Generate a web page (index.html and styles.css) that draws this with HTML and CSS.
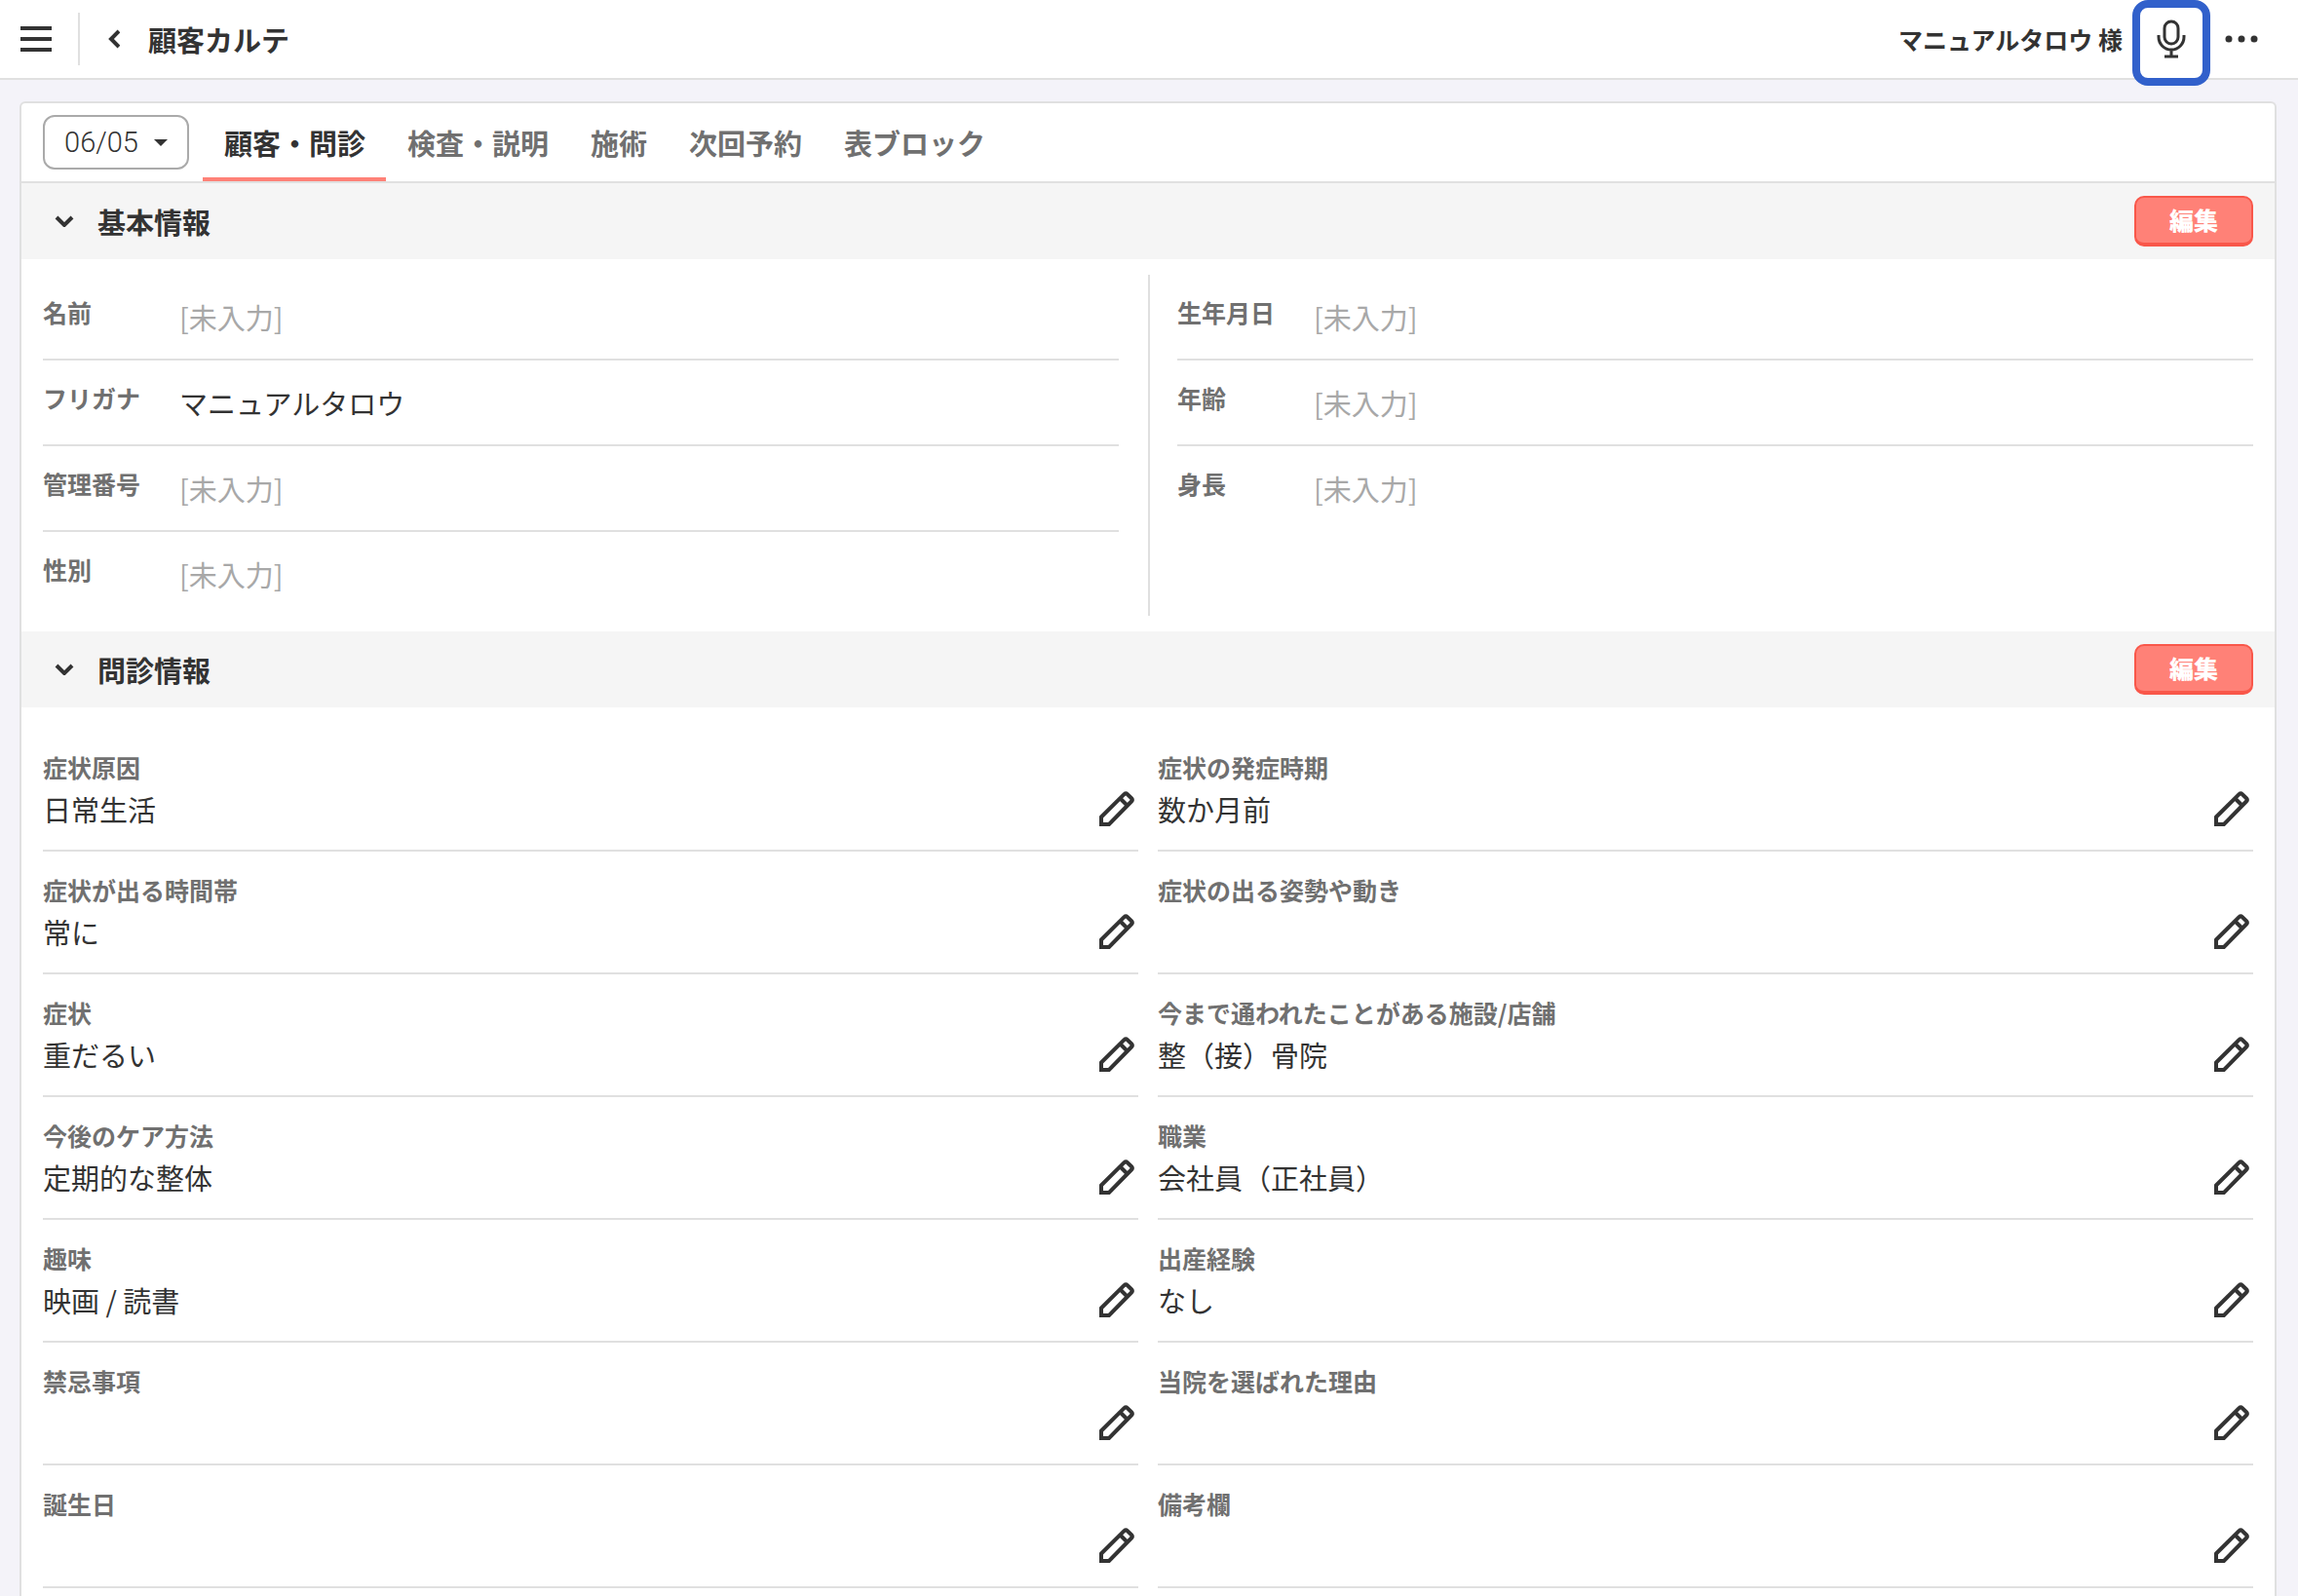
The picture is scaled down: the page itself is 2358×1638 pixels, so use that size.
FILE: index.html
```html
<!DOCTYPE html>
<html lang="ja">
<head>
<meta charset="utf-8">
<meta name="viewport" content="width=device-width, initial-scale=1">
<title>顧客カルテ</title>
<link rel="stylesheet" href="styles.css">
</head>
<body>
<svg class="sprite" aria-hidden="true">
  <symbol id="pencil" viewBox="0 0 36 36">
    <path d="M2 26.500 25.500 3.200Q27.200 1.600 28.900 3.200L33 7.200Q34.600 8.900 33 10.500L10 34H2Z"/>
    <path d="M21.500 7.500 29 15"/>
  </symbol>
  <symbol id="down" viewBox="0 0 20 12">
    <path d="M2 2 10 10 18 2"/>
  </symbol>
</svg>

<header class="topbar">
  <button class="icon-button menu" type="button" aria-label="メニュー">
    <svg width="32" height="26" viewBox="0 0 32 26"><path d="M0 2H32M0 13H32M0 24H32"/></svg>
  </button>
  <button class="icon-button back" type="button" aria-label="戻る">
    <svg width="12" height="20" viewBox="0 0 12 20"><path d="M11 2 3 10 11 18"/></svg>
  </button>
  <h1 class="page-title">顧客カルテ</h1>
  <p class="customer">マニュアルタロウ 様</p>
  <button class="icon-button mic" type="button" aria-label="音声入力">
    <svg width="30" height="40" viewBox="0 0 30 40"><rect x="8" y="2" width="14" height="23" rx="7"/><path d="M2 16v2a13 13 0 0 0 26 0v-2M15 31v7M8 38H22"/></svg>
  </button>
  <button class="icon-button more" type="button" aria-label="その他">
    <svg class="dots" width="34" height="8" viewBox="0 0 34 8"><circle cx="4" cy="4" r="3.500"/><circle cx="17" cy="4" r="3.500"/><circle cx="30" cy="4" r="3.500"/></svg>
  </button>
</header>

<main class="card">
  <nav class="tabs">
    <button class="date" type="button">06/05<span class="caret"></span></button>
    <a class="tab active" href="#basic">顧客・問診</a>
    <a class="tab" href="#exam">検査・説明</a>
    <a class="tab" href="#treatment">施術</a>
    <a class="tab" href="#next">次回予約</a>
    <a class="tab" href="#blocks">表ブロック</a>
  </nav>

  <section id="basic">
    <div class="section-head">
      <button class="icon-button fold" type="button" aria-label="基本情報を折りたたむ"><svg width="20" height="12"><use href="#down"/></svg></button>
      <h2 class="section-title">基本情報</h2>
      <button class="edit" type="button">編集</button>
    </div>
    <div class="basic">
      <dl class="basic-column">
        <div class="basic-row"><dt class="label">名前</dt><dd class="value empty">[未入力]</dd></div>
        <div class="basic-row"><dt class="label">フリガナ</dt><dd class="value">マニュアルタロウ</dd></div>
        <div class="basic-row"><dt class="label">管理番号</dt><dd class="value empty">[未入力]</dd></div>
        <div class="basic-row"><dt class="label">性別</dt><dd class="value empty">[未入力]</dd></div>
      </dl>
      <dl class="basic-column">
        <div class="basic-row"><dt class="label">生年月日</dt><dd class="value empty">[未入力]</dd></div>
        <div class="basic-row"><dt class="label">年齢</dt><dd class="value empty">[未入力]</dd></div>
        <div class="basic-row"><dt class="label">身長</dt><dd class="value empty">[未入力]</dd></div>
      </dl>
    </div>
  </section>

  <section id="interview">
    <div class="section-head">
      <button class="icon-button fold" type="button" aria-label="問診情報を折りたたむ"><svg width="20" height="12"><use href="#down"/></svg></button>
      <h2 class="section-title">問診情報</h2>
      <button class="edit" type="button">編集</button>
    </div>
    <div class="answers">
      <div class="answer"><div><h3 class="label">症状原因</h3><p class="value">日常生活</p></div><button class="icon-button pen" type="button" aria-label="症状原因を編集"><svg width="36" height="36"><use href="#pencil"/></svg></button></div>
      <div class="answer"><div><h3 class="label">症状の発症時期</h3><p class="value">数か月前</p></div><button class="icon-button pen" type="button" aria-label="症状の発症時期を編集"><svg width="36" height="36"><use href="#pencil"/></svg></button></div>
      <div class="answer"><div><h3 class="label">症状が出る時間帯</h3><p class="value">常に</p></div><button class="icon-button pen" type="button" aria-label="症状が出る時間帯を編集"><svg width="36" height="36"><use href="#pencil"/></svg></button></div>
      <div class="answer"><div><h3 class="label">症状の出る姿勢や動き</h3></div><button class="icon-button pen" type="button" aria-label="症状の出る姿勢や動きを編集"><svg width="36" height="36"><use href="#pencil"/></svg></button></div>
      <div class="answer"><div><h3 class="label">症状</h3><p class="value">重だるい</p></div><button class="icon-button pen" type="button" aria-label="症状を編集"><svg width="36" height="36"><use href="#pencil"/></svg></button></div>
      <div class="answer"><div><h3 class="label">今まで通われたことがある施設/店舗</h3><p class="value">整（接）骨院</p></div><button class="icon-button pen" type="button" aria-label="今まで通われたことがある施設/店舗を編集"><svg width="36" height="36"><use href="#pencil"/></svg></button></div>
      <div class="answer"><div><h3 class="label">今後のケア方法</h3><p class="value">定期的な整体</p></div><button class="icon-button pen" type="button" aria-label="今後のケア方法を編集"><svg width="36" height="36"><use href="#pencil"/></svg></button></div>
      <div class="answer"><div><h3 class="label">職業</h3><p class="value">会社員（正社員）</p></div><button class="icon-button pen" type="button" aria-label="職業を編集"><svg width="36" height="36"><use href="#pencil"/></svg></button></div>
      <div class="answer"><div><h3 class="label">趣味</h3><p class="value">映画 / 読書</p></div><button class="icon-button pen" type="button" aria-label="趣味を編集"><svg width="36" height="36"><use href="#pencil"/></svg></button></div>
      <div class="answer"><div><h3 class="label">出産経験</h3><p class="value">なし</p></div><button class="icon-button pen" type="button" aria-label="出産経験を編集"><svg width="36" height="36"><use href="#pencil"/></svg></button></div>
      <div class="answer"><div><h3 class="label">禁忌事項</h3></div><button class="icon-button pen" type="button" aria-label="禁忌事項を編集"><svg width="36" height="36"><use href="#pencil"/></svg></button></div>
      <div class="answer"><div><h3 class="label">当院を選ばれた理由</h3></div><button class="icon-button pen" type="button" aria-label="当院を選ばれた理由を編集"><svg width="36" height="36"><use href="#pencil"/></svg></button></div>
      <div class="answer"><div><h3 class="label">誕生日</h3></div><button class="icon-button pen" type="button" aria-label="誕生日を編集"><svg width="36" height="36"><use href="#pencil"/></svg></button></div>
      <div class="answer"><div><h3 class="label">備考欄</h3></div><button class="icon-button pen" type="button" aria-label="備考欄を編集"><svg width="36" height="36"><use href="#pencil"/></svg></button></div>
    </div>
  </section>
</main>
</body>
</html>
```
FILE: styles.css
```css
*,
*::after {
  box-sizing: border-box;
}

body {
  display: flex;
  flex-direction: column;
  min-height: 100vh;
  margin: 0;
  background: #f4f3f9;
  color: #333;
  font: 400 29px/44px "Noto Sans CJK JP", sans-serif;
}

h1, h2, h3, p, dl, dd {
  margin: 0;
}

button {
  font: inherit;
  color: inherit;
  cursor: pointer;
}

a {
  color: inherit;
  text-decoration: none;
}

svg {
  display: block;
  fill: none;
  stroke: #333;
  stroke-width: 4;
}

.sprite {
  position: absolute;
  width: 0;
  height: 0;
}

.icon-button {
  display: flex;
  align-items: center;
  justify-content: center;
  flex: none;
  padding: 0;
  border: 0;
  background: none;
}

/* Top bar */
.topbar {
  display: flex;
  align-items: center;
  height: 82px;
  padding-right: 34px;
  border-bottom: 2px solid #e0e0e0;
  background: #fff;
}

.menu {
  width: 82px;
  height: 54px;
  padding-right: 6px;
  border-right: 2px solid #e0e0e0;
}

.back {
  width: 70px;
  height: 54px;
}

.page-title {
  font-size: 29px;
  line-height: 44px;
}

.customer {
  margin: 0 2px 0 auto;
  font-size: 25px;
  font-weight: 700;
}

.mic {
  position: relative;
  width: 96px;
  height: 80px;
}

.mic svg {
  stroke-width: 3;
}

.mic::after {
  content: "";
  position: absolute;
  top: 0;
  left: 8px;
  width: 80px;
  height: 88px;
  border: 8px solid #3160cb;
  border-radius: 16px;
}

.more {
  width: 48px;
  height: 80px;
}

.dots {
  fill: #333;
  stroke: none;
}

/* Chart card */
.card {
  flex: 1;
  margin: 22px 22px 0 20px;
  border: 2px solid #e0e0e0;
  border-bottom: 0;
  border-radius: 6px 6px 0 0;
  background: #fff;
}

.tabs {
  display: flex;
  align-items: center;
  height: 82px;
  padding-left: 22px;
  border-bottom: 2px solid #e0e0e0;
}

.date {
  display: flex;
  align-items: center;
  justify-content: center;
  gap: 16px;
  width: 150px;
  height: 56px;
  margin-right: 14px;
  padding: 0;
  border: 2px solid #aaa;
  border-radius: 12px;
  background: #fff;
  font-family: Roboto, sans-serif;
  font-weight: 300;
}

.caret {
  border: 7px solid transparent;
  border-top-color: #333;
  border-bottom: 0;
}

.tab {
  height: 80px;
  padding: 18px 21px 0 22px;
  border-bottom: 4px solid transparent;
  color: #707070;
  font-weight: 700;
}

.tab.active {
  border-color: #ff8177;
  color: #333;
}

.section-head {
  display: flex;
  align-items: center;
  height: 78px;
  padding: 0 22px;
  background: #f5f5f5;
}

.fold {
  width: 44px;
  height: 44px;
  margin-right: 12px;
}

.section-title {
  flex: 1;
  font-size: 29px;
  line-height: 44px;
}

.edit {
  width: 122px;
  height: 52px;
  padding: 0 0 2px;
  border: 2px solid #f9574a;
  border-bottom-width: 4px;
  border-radius: 10px;
  background: #ff8177;
  color: #fff;
  font-size: 25px;
  font-weight: 900;
  line-height: 44px;
}

.label {
  color: #707070;
  font-size: 25px;
  font-weight: 700;
  line-height: 44px;
}

.value {
  line-height: 42px;
}

.empty {
  color: #a8a8a8;
}

/* Basic information */
.basic {
  display: flex;
  padding: 16px 22px;
}

.basic-column {
  flex: 1;
  box-sizing: content-box;
}

.basic-column:first-child {
  padding-right: 30px;
  border-right: 2px solid #e0e0e0;
}

.basic-column:last-child {
  padding-left: 28px;
}

.basic-row {
  display: grid;
  grid-template-columns: 140px 1fr;
  height: 88px;
  padding-top: 16px;
  border-bottom: 2px solid #e0e0e0;
}

.basic-row:last-child {
  height: 86px;
  border-bottom: 0;
}

.basic-row .value {
  padding-top: 6px;
}

/* Interview answers */
.answers {
  display: grid;
  grid-template-columns: 1fr 1fr;
  column-gap: 20px;
  padding: 22px 22px 0;
}

.answer {
  display: flex;
  justify-content: space-between;
  align-items: flex-end;
  height: 126px;
  border-bottom: 2px solid #e0e0e0;
}

.answer > div {
  align-self: flex-start;
  padding-top: 17px;
}

.pen {
  width: 44px;
  height: 84px;
}
```
